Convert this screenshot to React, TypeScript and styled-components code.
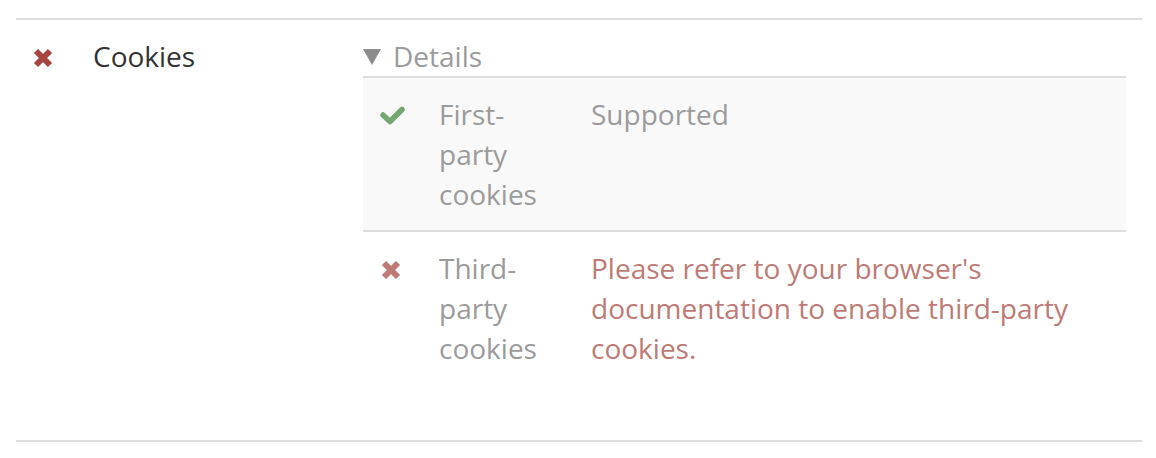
import React from "react";
import styled, { createGlobalStyle } from "styled-components";

const Global = createGlobalStyle`
  html, body { margin: 0; padding: 0; background: #fff; }
  body {
    font-family: "Open Sans", "Liberation Sans", sans-serif;
    font-size: 28px;
    line-height: 40px;
    color: #333;
  }
`;

const Page = styled.div`
  padding: 18px 14px 0 16px;
`;

const Table = styled.div`
  border-top: 2px solid #ddd;
  border-bottom: 2px solid #ddd;
`;

const Row = styled.div`
  display: grid;
  grid-template-columns: 61px 270px 1fr;
`;

const Cell = styled.div`
  padding: 16px;
  min-width: 0;
`;

const IconBox = styled.div<{ $shift?: number }>`
  height: 40px;
  box-sizing: border-box;
  padding-top: 3px;
  padding-left: ${(p) => p.$shift ?? 0}px;
  display: flex;
  align-items: center;
`;

const Name = styled.div`
  color: #333;
`;

const Details = styled.div`
  margin-bottom: 40px;
`;

const Summary = styled.div`
  display: flex;
  align-items: center;
  color: #9b9b9b;
  height: 40px;
`;

const Triangle = styled.span`
  width: 0;
  height: 0;
  border-left: 9px solid transparent;
  border-right: 9px solid transparent;
  border-top: 16px solid #8c8c8c;
  margin: 2px 12px 0 0;
`;

const Inner = styled.div`
  border-top: 2px solid #ddd;
`;

const InnerRow = styled.div<{ $striped?: boolean }>`
  display: grid;
  grid-template-columns: 60px 152px 1fr;
  background: ${(p) => (p.$striped ? "#f9f9f9" : "transparent")};
  & + & {
    border-top: 2px solid #ddd;
  }
`;

const Label = styled.div`
  color: #9b9b9b;
`;

const Value = styled.div<{ $error?: boolean }>`
  color: ${(p) => (p.$error ? "#be7a75" : "#9b9b9b")};
`;

const Cross = ({ color }: { color: string }) => (
  <svg width="20" height="20" viewBox="0 0 20 20">
    <path d="M3 3 L17 17 M17 3 L3 17" stroke={color} strokeWidth="6" strokeLinecap="butt" fill="none" />
  </svg>
);

const Check = ({ color }: { color: string }) => (
  <svg width="27" height="20" viewBox="0 0 27 20">
    <path
      d="M4 9 L11 15.5 L23 3.5"
      stroke={color}
      strokeWidth="5.5"
      strokeLinecap="round"
      strokeLinejoin="round"
      fill="none"
    />
  </svg>
);

export default function App() {
  return (
    <>
      <Global />
      <Page>
        <Table>
          <Row>
            <Cell>
              <IconBox $shift={1}>
                <Cross color="#a8443f" />
              </IconBox>
            </Cell>
            <Cell>
              <Name>Cookies</Name>
            </Cell>
            <Cell>
              <Details>
                <Summary>
                  <Triangle />
                  Details
                </Summary>
                <Inner>
                  <InnerRow $striped>
                    <Cell>
                      <IconBox>
                        <Check color="#72a772" />
                      </IconBox>
                    </Cell>
                    <Cell>
                      <Label>First-party cookies</Label>
                    </Cell>
                    <Cell>
                      <Value>Supported</Value>
                    </Cell>
                  </InnerRow>
                  <InnerRow>
                    <Cell>
                      <IconBox $shift={2}>
                        <Cross color="#c07a76" />
                      </IconBox>
                    </Cell>
                    <Cell>
                      <Label>Third-party cookies</Label>
                    </Cell>
                    <Cell>
                      <Value $error>
                        Please refer to your browser's documentation to enable third-party cookies.
                      </Value>
                    </Cell>
                  </InnerRow>
                </Inner>
              </Details>
            </Cell>
          </Row>
        </Table>
      </Page>
    </>
  );
}
